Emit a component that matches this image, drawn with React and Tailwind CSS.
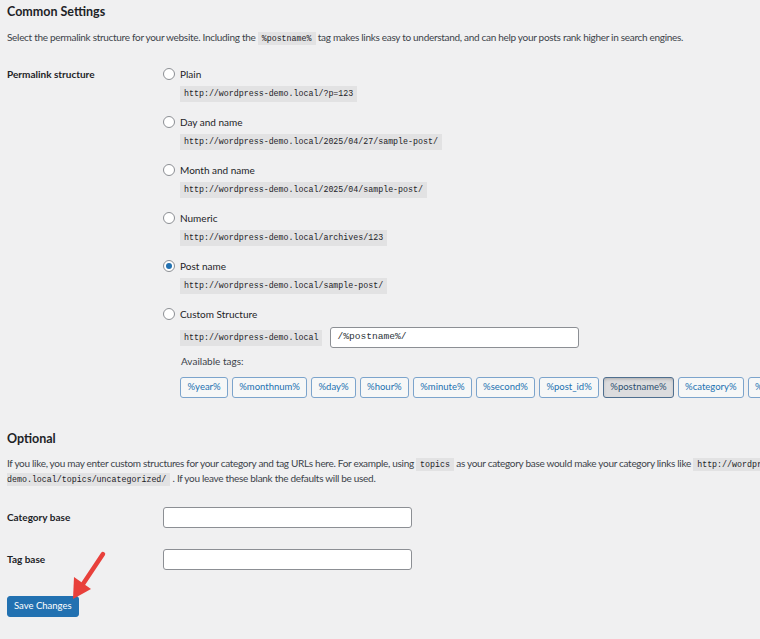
import React from 'react'

const options = [
  { label: 'Plain', url: 'http://wordpress-demo.local/?p=123' },
  { label: 'Day and name', url: 'http://wordpress-demo.local/2025/04/27/sample-post/' },
  { label: 'Month and name', url: 'http://wordpress-demo.local/2025/04/sample-post/' },
  { label: 'Numeric', url: 'http://wordpress-demo.local/archives/123' },
  { label: 'Post name', url: 'http://wordpress-demo.local/sample-post/', checked: true },
]

const tags = [
  '%year%',
  '%monthnum%',
  '%day%',
  '%hour%',
  '%minute%',
  '%second%',
  '%post_id%',
  '%postname%',
  '%category%',
  '%author%',
]

function Radio({ checked }) {
  return (
    <span className="w-[12px] h-[12px] rounded-full border border-[#8c8f94] bg-white flex items-center justify-center shrink-0">
      {checked && <span className="w-[6px] h-[6px] rounded-full bg-[#2271b1]" />}
    </span>
  )
}

function Code({ children }) {
  return (
    <code className="bg-[#e2e2e3] text-[#1d2327] px-[4px] py-[2px] text-[8.3px] leading-[12px] tracking-normal [font-family:'Liberation_Mono',monospace]">
      {children}
    </code>
  )
}

export default function App() {
  return (
    <div className="w-[760px] h-[639px] overflow-hidden bg-[#f0f0f1] relative">
      <div className="w-[900px] pl-[7px] text-[10px] text-[#3c434a] [font-family:Lato,'Liberation_Sans',sans-serif]">
        {/* Common Settings */}
        <h2 className="text-[12.5px] font-bold text-[#1d2327] leading-[24px]">Common Settings</h2>
        <p className="mt-[6px] leading-[15px] tracking-[-0.3px]">
          Select the permalink structure for your website. Including the <Code>%postname%</Code> tag makes links easy to
          understand, and can help your posts rank higher in search engines.
        </p>

        <div className="flex mt-[21px]">
          <div className="w-[156px] shrink-0 font-bold text-[#1d2327] leading-[16px]">Permalink structure</div>
          <div className="flex flex-col">
            {options.map((o) => (
              <div key={o.label} className="h-[48px] flex flex-col">
                <label className="flex items-center gap-[5px] h-[16px] text-[#1d2327]">
                  <Radio checked={o.checked} />
                  {o.label}
                </label>
                <div className="mt-[4px] pl-[17px] h-[16px] flex items-center">
                  <Code>{o.url}</Code>
                </div>
              </div>
            ))}
            <label className="flex items-center gap-[5px] h-[16px] text-[#1d2327]">
              <Radio />
              Custom Structure
            </label>
            <div className="mt-[5px] pl-[17px] flex items-center gap-[8px]">
              <Code>http://wordpress-demo.local</Code>
              <div className="w-[249px] h-[21px] bg-white border border-[#8c8f94] rounded-[3px] flex items-center px-[6px] text-[#2c3338] text-[9.6px] [font-family:'Liberation_Mono',monospace]">
                /%postname%/
              </div>
            </div>
            <div className="pl-[18px] mt-[6px] leading-[14px] text-[#3c434a]">Available tags:</div>
            <div className="pl-[17px] mt-[9px] flex gap-[3.5px]">
              {tags.map((t) => (
                <button
                  key={t}
                  className={
                    t === '%postname%'
                      ? 'h-[21px] px-[6.5px] rounded-[3px] border border-[#4f6f8f] bg-[#dcdcde] text-[#2c4f70] text-[9.5px] shadow-[inset_0_2px_5px_-3px_rgba(0,0,0,0.5)]'
                      : 'h-[21px] px-[6.5px] rounded-[3px] border border-[#7ca4cc] bg-[#f6f7f7] text-[#2271b1] text-[9.5px]'
                  }
                >
                  {t}
                </button>
              ))}
            </div>
          </div>
        </div>

        {/* Optional */}
        <h2 className="mt-[30px] text-[12.5px] font-bold text-[#1d2327] leading-[22px]">Optional</h2>
        <p className="mt-[6px] leading-[15px] whitespace-nowrap tracking-[-0.3px]">
          If you like, you may enter custom structures for your category and tag URLs here. For example, using{' '}
          <Code>topics</Code> as your category base would make your category links like{' '}
          <Code>
            http://wordpress-
            <br />
            demo.local/topics/uncategorized/
          </Code>{' '}
          . If you leave these blank the defaults will be used.
        </p>

        <div className="flex items-center mt-[21px]">
          <div className="w-[156px] shrink-0 font-bold text-[#1d2327]">Category base</div>
          <div className="w-[249px] h-[21px] bg-white border border-[#8c8f94] rounded-[3px]" />
        </div>
        <div className="flex items-center mt-[21px]">
          <div className="w-[156px] shrink-0 font-bold text-[#1d2327]">Tag base</div>
          <div className="w-[249px] h-[21px] bg-white border border-[#8c8f94] rounded-[3px]" />
        </div>

        <button className="mt-[26px] h-[21px] px-[6px] rounded-[3px] bg-[#2271b1] border border-[#2271b1] text-white text-[9.5px]">
          Save Changes
        </button>
      </div>

      {/* annotation arrow */}
      <svg className="absolute left-0 top-0 pointer-events-none" width="760" height="639">
        <line x1="103" y1="554" x2="83" y2="584" stroke="#e8403b" strokeWidth="4.5" strokeLinecap="round" />
        <polygon points="73,599 74,577 91,589" fill="#e8403b" />
      </svg>
    </div>
  )
}
